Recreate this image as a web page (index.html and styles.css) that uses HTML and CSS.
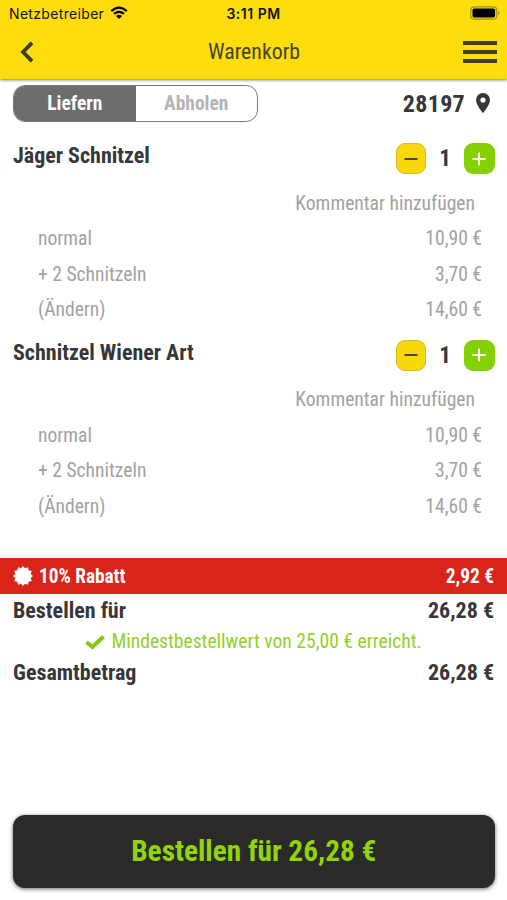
FILE: index.html
```html
<!DOCTYPE html>
<html lang="de">
<head>
<meta charset="utf-8">
<title>Warenkorb</title>
<link rel="stylesheet" href="styles.css">
</head>
<body>
<div class="app">
  <header class="header">
    <div class="status">
      <div class="carrier"><span>Netzbetreiber</span>
        <svg class="wifi" viewBox="0 0 18 13"><path d="M0.5 4.2 Q9 -3.4 17.5 4.2 L15.9 5.9 Q9 -0.3 2.1 5.9Z"/><path d="M3.3 7.1 Q9 1.9 14.7 7.1 L13.1 8.8 Q9 5.1 4.9 8.8Z"/><path d="M6 10 Q9 7.3 12 10 L9 13Z"/></svg>
      </div>
      <div class="time">3:11 PM</div>
      <svg class="battery" viewBox="0 0 30 14"><rect x="0.8" y="0.8" width="26" height="12.4" rx="3.5" fill="none" stroke="#a28f14" stroke-width="1.2"/><rect x="2.5" y="2.5" width="22.6" height="9" rx="1.8" fill="#000"/><path d="M28.2 4.8 Q30.6 7 28.2 9.2Z" fill="#a28f14"/></svg>
    </div>
    <div class="nav">
      <svg class="back" viewBox="0 0 14 22"><path d="M12 1.8 L3 11 L12 20.2" fill="none" stroke="#3c3b2c" stroke-width="3.8"/></svg>
      <h1 class="title">Warenkorb</h1>
      <div class="menu"><i></i><i></i><i></i></div>
    </div>
  </header>
  <div class="options">
    <div class="toggle"><div class="tab active">Liefern</div><div class="tab">Abholen</div></div>
    <div class="zip"><span>28197</span><svg class="pin" viewBox="0 0 14 20"><path fill-rule="evenodd" d="M7 0A7 7 0 0 0 0 7C0 12 7 20 7 20S14 12 14 7A7 7 0 0 0 7 0ZM7 4.5A2.6 2.6 0 1 1 7 9.7A2.6 2.6 0 1 1 7 4.5Z"/></svg></div>
  </div>
  <section class="item">
    <div class="item-head"><h2>Jäger Schnitzel</h2>
      <div class="stepper"><button class="minus"><svg viewBox="0 0 14 14"><path d="M0.5 7H13.5"/></svg></button><span>1</span><button class="plus"><svg viewBox="0 0 14 14"><path d="M0.5 7H13.5M7 0.5V13.5"/></svg></button></div></div>
    <div class="comment"><span>Kommentar hinzufügen</span></div>
    <div class="line"><span>normal</span><span>10,90 €</span></div>
    <div class="line"><span>+ 2 Schnitzeln</span><span>3,70 €</span></div>
    <div class="line"><span>(Ändern)</span><span>14,60 €</span></div>
  </section>
  <section class="item">
    <div class="item-head"><h2>Schnitzel Wiener Art</h2>
      <div class="stepper"><button class="minus"><svg viewBox="0 0 14 14"><path d="M0.5 7H13.5"/></svg></button><span>1</span><button class="plus"><svg viewBox="0 0 14 14"><path d="M0.5 7H13.5M7 0.5V13.5"/></svg></button></div></div>
    <div class="comment"><span>Kommentar hinzufügen</span></div>
    <div class="line"><span>normal</span><span>10,90 €</span></div>
    <div class="line"><span>+ 2 Schnitzeln</span><span>3,70 €</span></div>
    <div class="line"><span>(Ändern)</span><span>14,60 €</span></div>
  </section>
  <div class="discount"><div class="discount-name"><svg class="seal" viewBox="-10 -10 20 20"><path d="M0-10L2-7.7L5-8.7L5.7-5.7L8.7-5L7.7-2L10 0L7.7 2L8.7 5L5.7 5.7L5 8.7L2 7.7L0 10L-2 7.7L-5 8.7L-5.7 5.7L-8.7 5L-7.7 2L-10 0L-7.7-2L-8.7-5L-5.7-5.7L-5-8.7L-2-7.7Z"/></svg><span>10% Rabatt</span></div><span>2,92 €</span></div>
  <div class="total"><span>Bestellen für</span><span>26,28 €</span></div>
  <div class="minimum"><svg class="check" viewBox="0 0 20 16"><path d="M1.5 8L7.5 13L18.5 2.5" fill="none" stroke="#84cb0c" stroke-width="4"/></svg><span>Mindestbestellwert von 25,00 € erreicht.</span></div>
  <div class="total sum"><span>Gesamtbetrag</span><span>26,28 €</span></div>
  <button class="order">Bestellen für 26,28 €</button>
</div>
</body>
</html>
```
FILE: styles.css
```css
* { box-sizing: border-box; margin: 0; padding: 0; }
body { background: #fff; color: #373739; font-family: "Roboto Condensed", Roboto, sans-serif; font-stretch: 75%; }
svg { display: block; flex: none; }
button { border: 0; font: inherit; }
.app { width: 507px; height: 900px; display: flex; flex-direction: column; overflow: hidden; }
.header { height: 79px; flex: none; background: #fddd0b; box-shadow: 0 1px 3px rgba(0,0,0,.55); }
.status { height: 27px; padding: 0 7px 0 9px; display: grid; grid-template-columns: 1fr auto 1fr; align-items: center; font: 14px Inter, sans-serif; color: #161403; }
.carrier { display: flex; align-items: center; gap: 6px; letter-spacing: .33px; }
.wifi { width: 18px; height: 13px; fill: #000; margin-top: -2px; }
.time { font-weight: 600; letter-spacing: .5px; margin-right: 2px; }
.battery { width: 30px; height: 14px; justify-self: end; margin-top: -1px; }
.nav { height: 50px; padding: 0 10px 0 20px; display: grid; grid-template-columns: 1fr auto 1fr; align-items: center; color: #46442f; }
.back { width: 14px; height: 22px; }
.title { font-size: 21.8px; font-weight: 400; margin-right: 9px; margin-top: -1px; }
.menu { width: 34px; display: grid; gap: 5px; justify-self: end; }
.menu i { height: 4px; background: #403e2b; }
.options { height: 49px; flex: none; padding: 6px 17px 6px 13px; display: flex; justify-content: space-between; align-items: center; }
.toggle { width: 245px; height: 37px; display: flex; border: 1px solid #777; border-radius: 12px; overflow: hidden; }
.tab { flex: 1; text-align: center; line-height: 35px; font-size: 19.5px; font-weight: 700; color: #b4b4b4; }
.active { background: #6d6d6d; color: #fff; }
.zip { display: flex; align-items: center; gap: 11px; font-size: 24px; font-weight: 700; letter-spacing: .3px; }
.pin { width: 14px; height: 20px; fill: #373739; margin-top: -1px; }
.item { height: 196.6px; flex: none; padding-top: 10px; }
.item-head { height: 47px; padding: 5px 12.5px 0 13px; display: flex; justify-content: space-between; }
.item-head h2 { font-size: 22px; line-height: 26px; font-weight: 700; }
.stepper { display: flex; align-items: center; height: 31px; }
.stepper span { width: 38px; text-align: center; font-size: 23px; font-weight: 700; }
.stepper button { width: 30.5px; height: 31px; border-radius: 9px; display: grid; place-items: center; }
.stepper svg { width: 14px; height: 14px; fill: none; stroke-width: 1.8; }
.minus { background: #f6d80b; border: 1px solid #d6b923 !important; stroke: #373739; }
.plus { background: #84d000; stroke: #fff; }
.comment, .line { height: 35.5px; display: flex; align-items: center; justify-content: space-between; padding: 1px 25px 0 38px; font-size: 19.6px; color: #a2a2a2; }
.comment { justify-content: flex-end; padding-right: 32px; }
.discount { height: 36px; margin-top: 37px; flex: none; padding: 0 13px; display: flex; align-items: center; justify-content: space-between; background: #da2419; color: #fff; font-size: 19.3px; font-weight: 700; }
.discount-name { display: flex; align-items: center; gap: 6px; }
.seal { width: 20px; height: 20px; fill: #fff; margin-top: -1px; }
.total { height: 32px; flex: none; padding: 0 13px; display: flex; align-items: center; justify-content: space-between; font-size: 22px; font-weight: 700; }
.sum { margin-top: -1px; }
.minimum { height: 31px; flex: none; display: flex; align-items: center; justify-content: center; gap: 6px; color: #94d02a; font-size: 19.6px; }
.check { width: 20px; height: 16px; }
.order { margin: auto 12.5px 12.5px 13px; height: 73px; flex: none; border-radius: 12px; background: #2a2a28; color: #91d40a; font-size: 29.3px; font-weight: 700; box-shadow: 0 1px 4px rgba(0,0,0,.6); }
```
